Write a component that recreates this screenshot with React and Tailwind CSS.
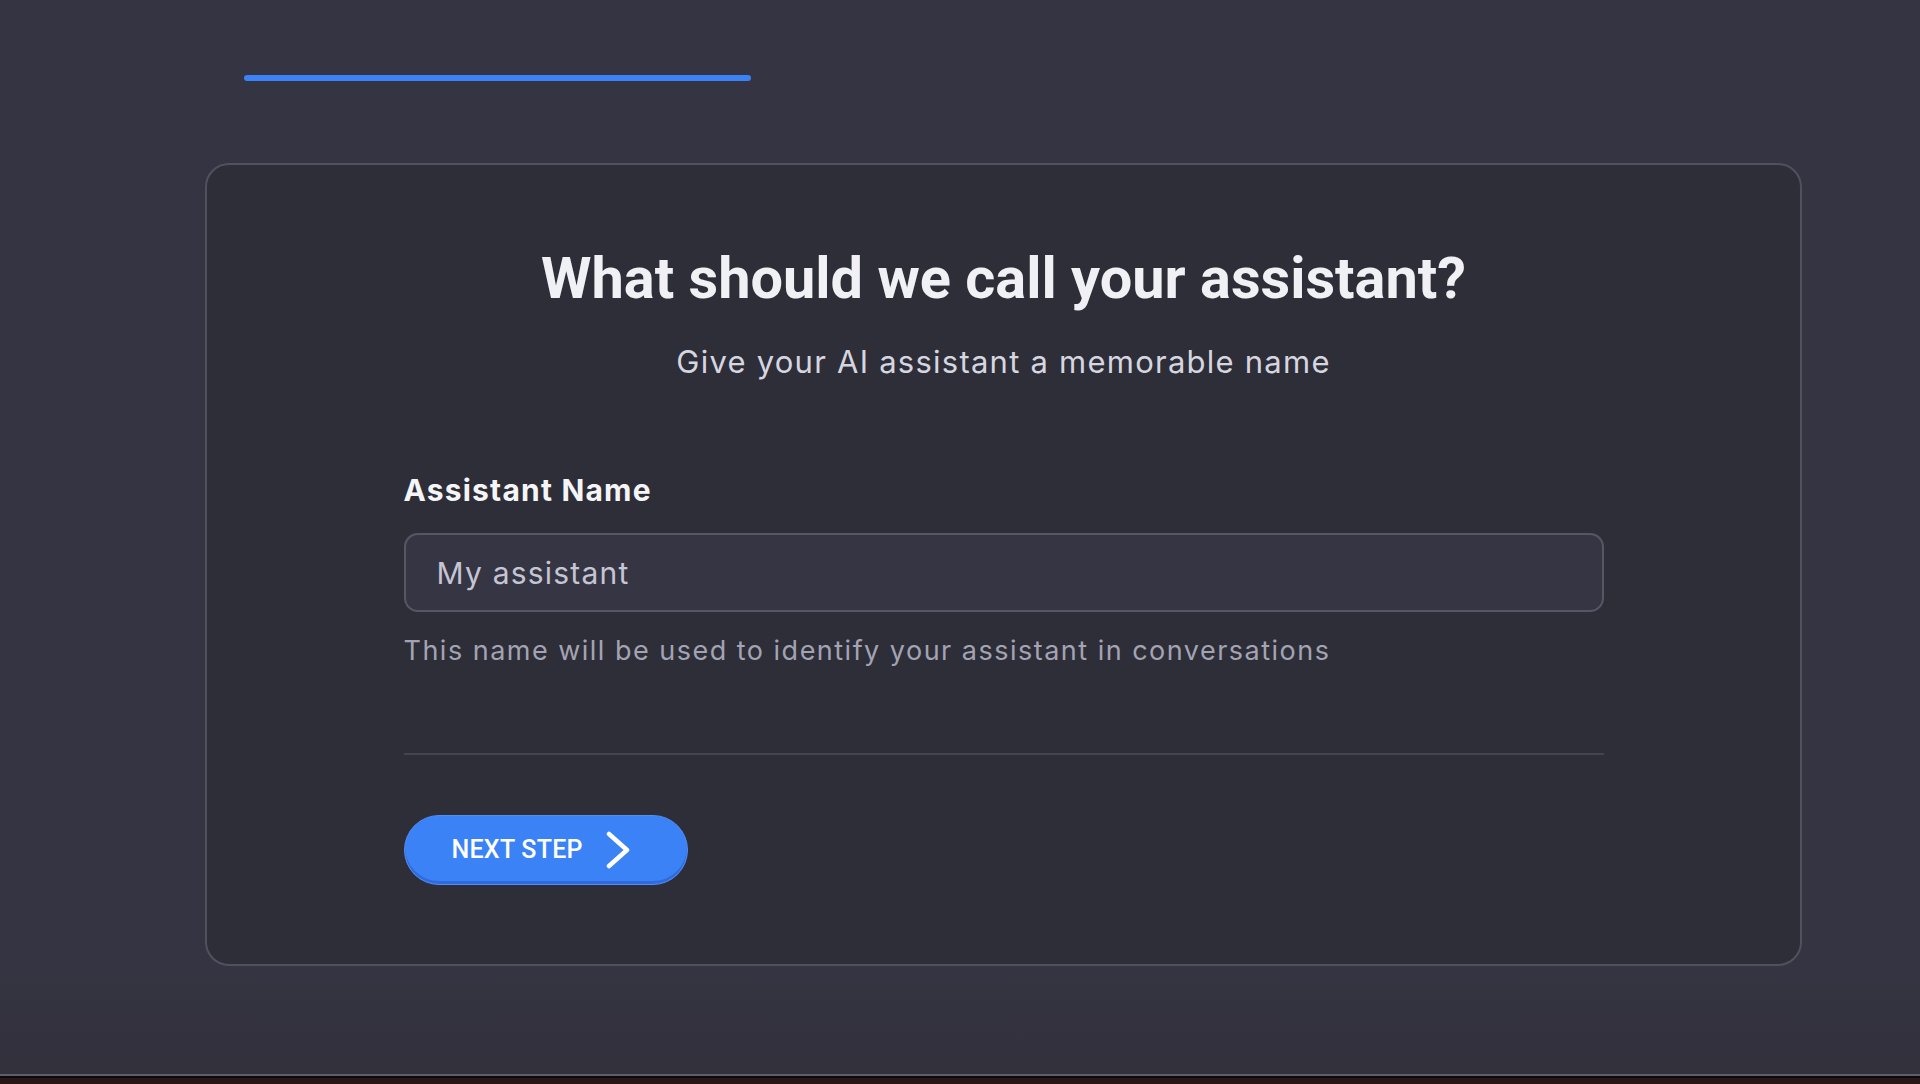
function ChevronRight() {
  return (
    <svg width="26" height="38" viewBox="0 0 26 38" fill="none">
      <polyline
        points="4,3 22,19 4,35"
        stroke="white"
        strokeWidth="4.5"
        strokeLinecap="round"
        strokeLinejoin="round"
      />
    </svg>
  );
}

export default function App() {
  return (
    <div className="flex h-[1084px] flex-col overflow-hidden bg-[#353442] font-['Inter',sans-serif]">
      <div className="flex-1 bg-gradient-to-b from-[#353442] via-[#353442] via-90% to-[#31303b]">
        {/* progress */}
        <div className="ml-[244px] mt-[75px] h-1.5 w-[507px] rounded-full bg-[#3b82f6]" />

        {/* card */}
        <div className="ml-[205px] mt-[82px] w-[1597px] rounded-[24px] border-2 border-[#51515d] bg-[#2e2e38]">
          <div className="mx-auto w-[1200px] pt-[81px] pb-[79px]">
            <h1 className="text-center font-['Roboto',sans-serif] text-[57.7px] font-bold leading-[64px] text-[#f0f0f5]">
              What should we call your assistant?
            </h1>
            <p className="mt-[32px] text-center text-[31px] leading-[40px] tracking-[0.04em] text-[#d6d6e0]">
              Give your AI assistant a memorable name
            </p>

            <label className="mt-[90px] block text-[30px] font-bold leading-[36px] tracking-[0.04em] text-[#f5f5f8]">
              Assistant Name
            </label>
            <div className="mt-[25px] flex h-[79px] items-center rounded-[14px] border-2 border-[#575764] bg-[#363544] px-[31px]">
              <span className="text-[30px] leading-[36px] tracking-[0.04em] text-[#c5c5d3]">
                My assistant
              </span>
            </div>
            <p className="mt-[23px] text-[27px] leading-[32px] tracking-[0.055em] text-[#a3a3b3]">
              This name will be used to identify your assistant in conversations
            </p>

            <div className="mt-[86px] h-[2px] bg-[#44444f]" />

            <button className="mt-[60px] flex h-[70px] w-[284px] items-center gap-[22px] rounded-full border border-[#4f8ef7] bg-[#3b82f6] pl-[47px] font-['Roboto',sans-serif] text-[25px] font-medium tracking-[0.01em] text-white shadow-[inset_0_-3px_0_rgba(30,64,175,0.35)]">
              NEXT STEP
              <ChevronRight />
            </button>
          </div>
        </div>
      </div>
      <div className="h-[2px] bg-[#5c6168]" />
      <div className="h-[2px] bg-[#0b0b0d]" />
      <div className="h-[6px] bg-[#2b1519]" />
    </div>
  );
}
